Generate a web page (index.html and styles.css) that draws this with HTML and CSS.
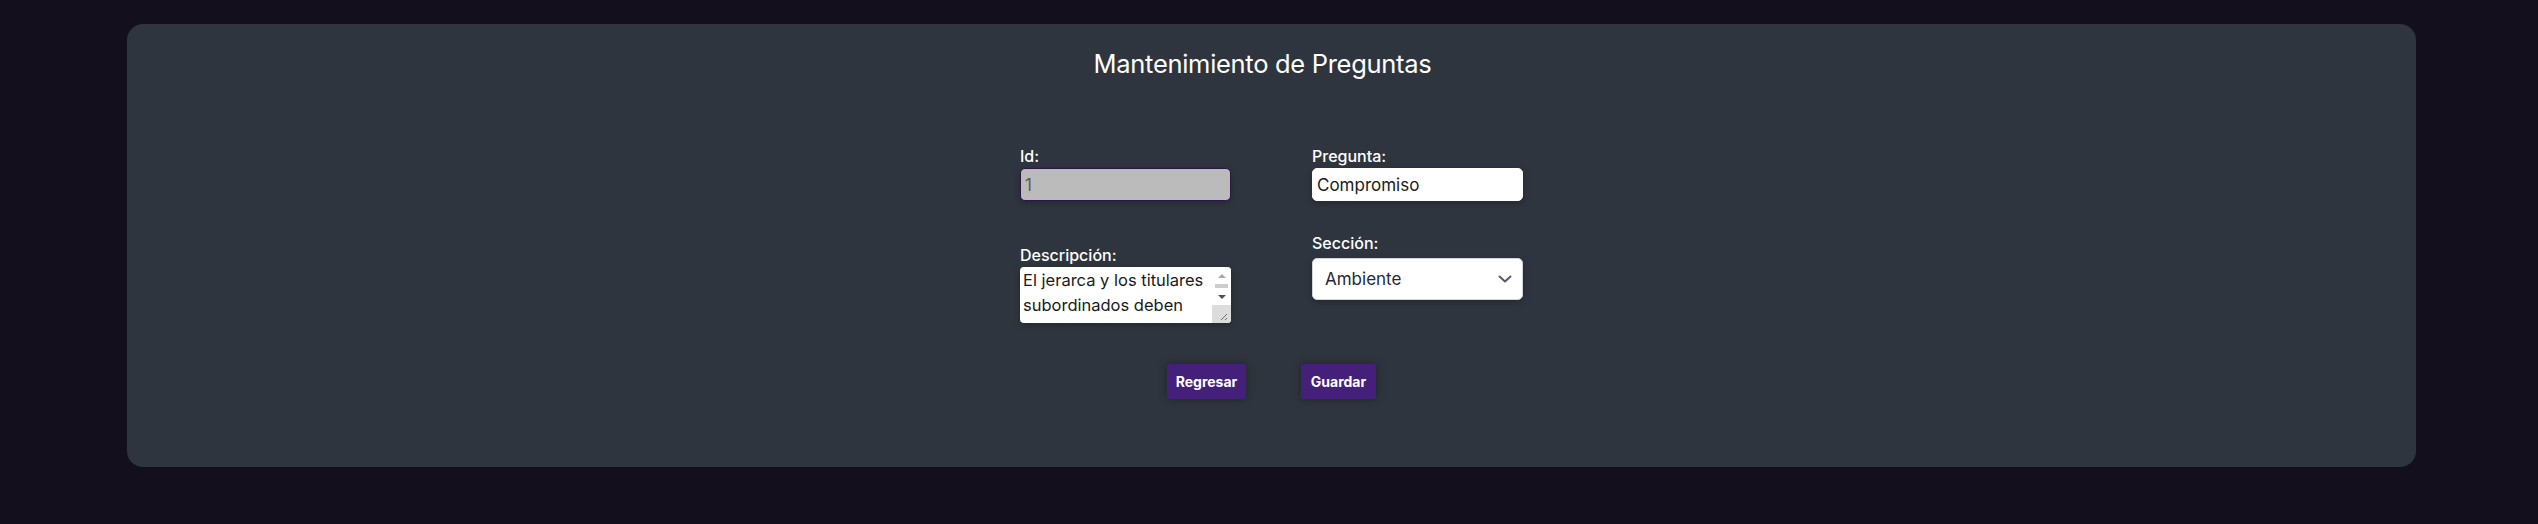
FILE: index.html
```html
<!DOCTYPE html>
<html lang="es">
<head>
<meta charset="utf-8">
<title>Mantenimiento de Preguntas</title>
<link rel="stylesheet" href="styles.css">
</head>
<body>
<main class="card">
  <h1 class="title">Mantenimiento de Preguntas</h1>
  <form class="form">
    <div class="grid">
      <div class="col col-left">
        <div class="field field-id">
          <label for="id">Id:</label>
          <input id="id" class="input input-disabled" type="text" value="1" readonly>
        </div>
        <div class="field field-desc">
          <label for="desc">Descripción:</label>
          <div class="textarea-wrap">
            <textarea id="desc" class="textarea" rows="2">El jerarca y los titulares subordinados deben promover la integridad y los valores éticos de la institución.</textarea>
            <div class="scrollbar" aria-hidden="true">
              <span class="sb-btn sb-up"></span>
              <span class="sb-thumb"></span>
              <span class="sb-btn sb-down"></span>
              <span class="sb-resizer">
                <svg width="19" height="18" viewBox="0 0 19 18"><path d="M15 9L9 15M15 13L13 15" stroke="#6e6e6e" stroke-width="1"/></svg>
              </span>
            </div>
          </div>
        </div>
      </div>
      <div class="col col-right">
        <div class="field field-preg">
          <label for="preg">Pregunta:</label>
          <input id="preg" class="input" type="text" value="Compromiso">
        </div>
        <div class="field field-sec">
          <label for="sec">Sección:</label>
          <select id="sec" class="select">
            <option>Ambiente</option>
            <option>Riesgo</option>
            <option>Control</option>
          </select>
        </div>
      </div>
    </div>
    <div class="actions">
      <button type="button" class="btn btn-back">Regresar</button>
      <button type="button" class="btn btn-save">Guardar</button>
    </div>
  </form>
</main>
</body>
</html>
```

FILE: styles.css
```css
html, body {
  margin: 0;
  padding: 0;
  background: #140f1d;
}
body {
  padding: 24px 122px 0 127px;
  font-family: "Inter", "Open Sans", sans-serif;
  color: #fff;
}
.card {
  background: #2f353e;
  border-radius: 16px;
  height: 443px;
  box-sizing: border-box;
  padding-top: 23px;
}
.title {
  margin: 0;
  text-align: center;
  font-weight: 400;
  font-size: 25.5px;
  letter-spacing: -0.3px;
  line-height: 34px;
  padding-right: 18px;
}
.form {
  margin-top: 66px;
}
.grid {
  display: flex;
  justify-content: center;
  gap: 81px;
}
.col {
  width: 211px;
  display: flex;
  flex-direction: column;
}
.field label {
  display: block;
  font-size: 16px;
  font-weight: 500;
  line-height: 18px;
  margin-bottom: 3px;
}
.field-sec label {
  margin-bottom: 6px;
}
.input {
  display: block;
  box-sizing: border-box;
  width: 211px;
  height: 33px;
  margin: 0;
  padding: 0 4px;
  border: 1px solid #fff;
  border-radius: 5px;
  background: #fff;
  color: #1a1a1a;
  font-family: inherit;
  font-size: 17px;
  box-shadow: 0 2px 6px rgba(0,0,0,0.25);
  outline: none;
}
.input-disabled {
  background: #bbbbbb;
  border-color: #2a1748;
  color: #5a5a5a;
}
.field-desc {
  margin-top: 45px;
}
.textarea-wrap {
  position: relative;
  width: 211px;
  height: 56px;
  border-radius: 4px;
  box-shadow: 0 2px 6px rgba(0,0,0,0.25);
}
.textarea {
  display: block;
  box-sizing: border-box;
  width: 211px;
  height: 56px;
  margin: 0;
  padding: 1px 19px 1px 3px;
  border: none;
  border-radius: 4px;
  background: #fff;
  color: #1a1a1a;
  font-family: inherit;
  font-size: 16.5px;
  line-height: 25px;
  resize: none;
  overflow: hidden;
  outline: none;
}
.scrollbar {
  position: absolute;
  top: 0;
  right: 0;
  width: 19px;
  height: 56px;
  display: flex;
  flex-direction: column;
  align-items: center;
  background: #fff;
  border-radius: 0 4px 4px 0;
  overflow: hidden;
}
.sb-btn {
  flex: 0 0 17px;
  width: 19px;
  display: flex;
  align-items: center;
  justify-content: center;
}
.sb-btn::before {
  content: "";
  width: 0;
  height: 0;
  border-left: 4px solid transparent;
  border-right: 4px solid transparent;
}
.sb-up::before {
  border-bottom: 4px solid #a8a8a8;
}
.sb-down::before {
  border-top: 4px solid #505050;
}
.sb-thumb {
  flex: 0 0 4px;
  width: 13px;
  background: #cdcdcd;
}
.sb-resizer {
  flex: 0 0 18px;
  width: 19px;
  background: #dcdcdc;
  display: block;
}
.sb-resizer svg {
  display: block;
}
.field-sec {
  margin-top: 33px;
}
.select {
  display: block;
  box-sizing: border-box;
  width: 211px;
  height: 42px;
  margin: 0;
  padding: 0 32px 0 12px;
  border: 1px solid #d1d5db;
  border-radius: 5px;
  background: #fff url("data:image/svg+xml,%3Csvg xmlns='http://www.w3.org/2000/svg' viewBox='0 0 14 8' fill='none'%3E%3Cpath d='M1.5 1.5L7 6.5L12.5 1.5' stroke='%23555b66' stroke-width='2' stroke-linecap='round' stroke-linejoin='round'/%3E%3C/svg%3E") no-repeat right 10px center / 14px 8px;
  color: #1f2937;
  font-family: inherit;
  font-size: 17px;
  -webkit-appearance: none;
  appearance: none;
  box-shadow: 0 2px 6px rgba(0,0,0,0.25);
}
.actions {
  display: flex;
  justify-content: center;
  gap: 55px;
  margin-top: 41px;
}
.btn {
  height: 35px;
  padding: 0 6px;
  border: none;
  border-radius: 2px;
  background: #45207a;
  color: #fff;
  font-family: inherit;
  font-weight: 700;
  font-size: 14px;
  box-shadow: 0 0 10px rgba(0,0,0,0.35);
}
.btn-back { width: 79px; }
.btn-save { width: 75px; }
```
